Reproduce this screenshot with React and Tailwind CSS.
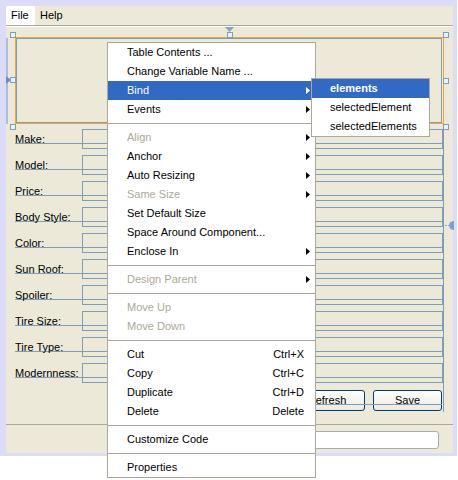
import React from "react";

const fields = [
  "Make:",
  "Model:",
  "Price:",
  "Body Style:",
  "Color:",
  "Sun Roof:",
  "Spoiler:",
  "Tire Size:",
  "Tire Type:",
  "Modernness:",
];

const menu = [
  { label: "Table Contents ..." },
  { label: "Change Variable Name ..." },
  { label: "Bind", arrow: true, active: true },
  { label: "Events", arrow: true },
  { sep: true },
  { label: "Align", arrow: true, disabled: true },
  { label: "Anchor", arrow: true },
  { label: "Auto Resizing", arrow: true },
  { label: "Same Size", arrow: true, disabled: true },
  { label: "Set Default Size" },
  { label: "Space Around Component..." },
  { label: "Enclose In", arrow: true },
  { sep: true },
  { label: "Design Parent", arrow: true, disabled: true },
  { sep: true },
  { label: "Move Up", disabled: true },
  { label: "Move Down", disabled: true },
  { sep: true },
  { label: "Cut", key: "Ctrl+X" },
  { label: "Copy", key: "Ctrl+C" },
  { label: "Duplicate", key: "Ctrl+D" },
  { label: "Delete", key: "Delete" },
  { sep: true },
  { label: "Customize Code" },
  { sep: true },
  { label: "Properties" },
];

function Arrow({ white }) {
  return (
    <svg width="4" height="7" viewBox="0 0 4 7" className="mr-[5px] shrink-0">
      <path d="M0 0 L4 3.5 L0 7 Z" fill={white ? "#ffffff" : "#000000"} />
    </svg>
  );
}

function Handle({ className }) {
  return (
    <div
      className={`absolute w-[6px] h-[6px] border border-[#7f9db9] bg-[#eef2f8] ${className}`}
    />
  );
}

function MenuItem({ item }) {
  if (item.sep) {
    return (
      <div className="h-[9px] pt-[4px]">
        <div className="h-px bg-[#aca899]" />
      </div>
    );
  }
  const color = item.active
    ? "bg-[#316ac5] text-white"
    : item.disabled
    ? "text-[#aca899]"
    : "text-black";
  return (
    <div className={`h-[19px] flex items-center pl-[19px] ${color}`}>
      <span className="flex-1 whitespace-nowrap">{item.label}</span>
      {item.key && <span className="pr-[11px]">{item.key}</span>}
      {item.arrow && <Arrow white={item.active} />}
    </div>
  );
}

function XpButton({ children, wide }) {
  return (
    <button
      className={`${wide ? "w-[76px]" : "w-[69px]"} h-[21px] rounded-[3px] border border-[#003c74] bg-linear-to-b from-white to-[#ece9e0] text-black text-[11px] leading-none`}
    >
      {children}
    </button>
  );
}

export default function App() {
  return (
    <div
      className="relative w-[458px] h-[480px] bg-white text-[11px] leading-[13px] overflow-hidden"
      style={{ fontFamily: '"Liberation Sans", Arial, sans-serif' }}
    >
      {/* window frame */}
      <div className="w-[457px] h-[456px] border-l-[6px] border-t-[6px] border-r-[4px] border-b-[3px] border-[#dcdcf8] bg-[#ece9d8] flex flex-col">
        {/* menu bar */}
        <div className="h-[19px] flex items-stretch">
          <div className="w-[29px] bg-white flex items-center pl-[5px]">File</div>
          <div className="flex items-center px-[5px]">Help</div>
        </div>
        <div className="h-px bg-[#aca899]" />
        <div className="h-px bg-white" />

        {/* design canvas */}
        <div className="relative h-[397px]">
          {/* anchors and handles */}
          <div className="absolute left-0 top-[11px] w-[2px] h-[86px] bg-[#a9bde0]" />
          <svg width="5" height="8" viewBox="0 0 5 8" className="absolute left-0 top-[49px]">
            <path d="M0 0 L5 4 L0 8 Z" fill="#6f8fc4" />
          </svg>
          <svg width="9" height="6" viewBox="0 0 9 6" className="absolute left-[219px] top-0">
            <path d="M0 0 H9 L4.5 5 Z" fill="#8aa0c2" />
          </svg>
          <div className="absolute left-[439px] top-[198px] w-[4px] border-t border-dotted border-[#9aa5b5]" />
          <svg width="6" height="9" viewBox="0 0 6 9" className="absolute left-[442px] top-[194px]">
            <path d="M6 0 A5 4.5 0 0 0 6 9 Z" fill="#7c9fd6" />
          </svg>
          <Handle className="left-[4px] top-[5px]" />
          <Handle className="left-[4px] top-[50px]" />
          <Handle className="left-[4px] top-[97px]" />
          <Handle className="left-[221px] top-[5px]" />
          <Handle className="left-[437px] top-[5px]" />
          <Handle className="left-[437px] top-[51px]" />
          <Handle className="left-[437px] top-[97px]" />

          {/* selected panel */}
          <div className="mt-[10px] ml-[9px] w-[429px] h-[87px] border border-[#f2a636]">
            <div className="w-[426px] h-full border border-[#7f9db9]" />
          </div>

          {/* form rows */}
          <div className="mt-[5px] ml-[9px] w-[429px] border-r border-[#7f9db9]">
            {fields.map((f) => (
              <div key={f} className="relative h-[26px]">
                <div className="w-[427px] h-[15px] pt-[4px] border-b border-[#7f9db9] whitespace-nowrap">
                  {f}
                </div>
                <div className="absolute left-[67px] top-0 w-[361px] h-[20px] border border-[#7f9db9]" />
              </div>
            ))}
            <div className="relative mt-[1px] h-[22px] flex justify-end gap-[8px] pr-[1px]">
              <XpButton wide>Refresh</XpButton>
              <XpButton>Save</XpButton>
              <div className="absolute left-[235px] top-[14px] w-[192px] h-px bg-[#7f9db9]" />
            </div>
          </div>
        </div>

        <div className="h-px bg-[#aca899]" />
        <div className="h-[28px] pt-[6px]">
          <div className="ml-[144px] w-[289px] h-[18px] rounded-[3px] border border-[#a5acb5] bg-white" />
        </div>
      </div>

      {/* context menu */}
      <div className="absolute left-[107px] top-[42px] w-[209px] h-[436px] border border-[#aca899] bg-white">
        {menu.map((item, i) => (
          <MenuItem key={i} item={item} />
        ))}
      </div>

      {/* Bind submenu */}
      <div className="absolute left-[311px] top-[78px] w-[119px] h-[59px] border border-[#aca899] bg-white">
        <div className="h-[19px] flex items-center pl-[18px] bg-[#316ac5] text-white font-bold">
          elements
        </div>
        <div className="h-[19px] flex items-center pl-[18px]">selectedElement</div>
        <div className="h-[19px] flex items-center pl-[18px]">selectedElements</div>
      </div>
    </div>
  );
}
